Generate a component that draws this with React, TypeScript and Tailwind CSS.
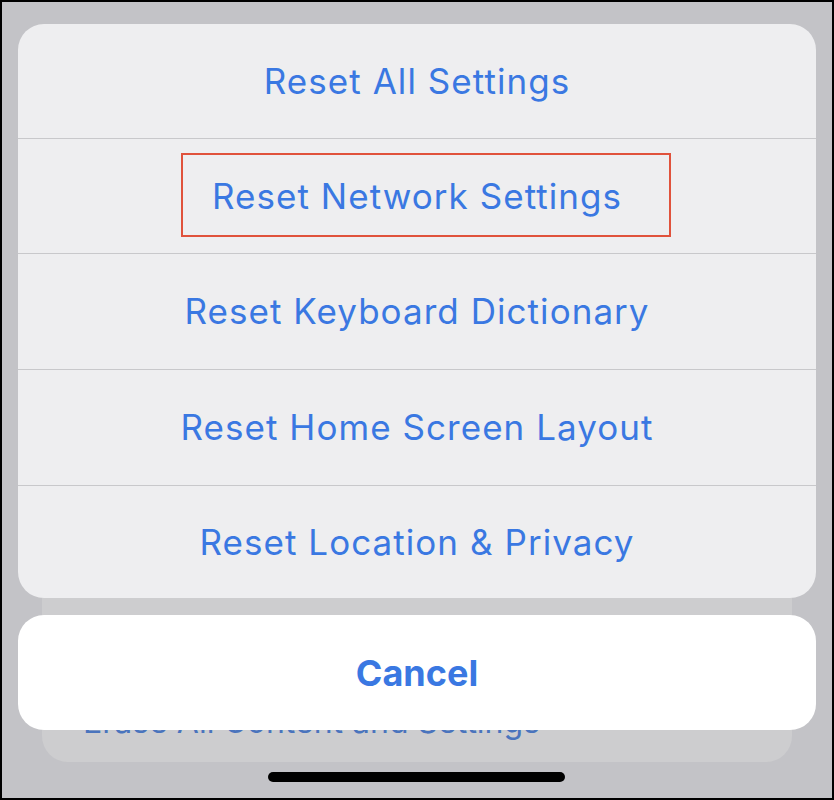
const rows = [
  { label: "Reset All Settings", h: "h-[114px]" },
  { label: "Reset Network Settings", h: "h-[115px]" },
  { label: "Reset Keyboard Dictionary", h: "h-[116px]" },
  { label: "Reset Home Screen Layout", h: "h-[116px]" },
  { label: "Reset Location & Privacy", h: "h-[113px]" },
];

export default function App() {
  return (
    <div
      className="w-[834px] h-[800px] border-2 border-black bg-[#c3c3c7] overflow-hidden"
      style={{ fontFamily: "Inter, 'Noto Sans', sans-serif" }}
    >
      {/* Action sheet */}
      <div className="mt-[22px] mx-[16px] bg-[#eeeef0] rounded-[26px] relative z-20">
        {rows.map((row, i) => (
          <div
            key={row.label}
            className={`relative ${row.h} flex items-center justify-center text-[35px] tracking-[0.03em] text-[#3a78e2] ${
              i > 0 ? "border-t border-[#c8c8cb]" : ""
            }`}
          >
            {row.label}
            {i === 1 && (
              <span className="absolute left-[163px] top-[14px] w-[490px] h-[84px] border-[2.5px] border-[#e0523c]" />
            )}
          </div>
        ))}
      </div>

      {/* Sheet stacked behind, with Cancel on top */}
      <div className="relative mx-[40px] h-[164px] bg-[#cdcdcf] rounded-b-[26px] z-10">
        <div className="absolute left-[41px] top-[108px] text-[32px] leading-none text-[#4a74bd] whitespace-nowrap">
          Erase All Content and Settings
        </div>
        <div className="absolute left-[-24px] top-[17px] w-[798px] h-[115px] bg-white rounded-[26px] flex items-center justify-center text-[36px] font-bold text-[#3a78e2]">
          Cancel
        </div>
      </div>

      {/* Home indicator */}
      <div className="mt-[10px] ml-[266px] w-[297px] h-[10px] rounded-full bg-black" />
    </div>
  );
}
